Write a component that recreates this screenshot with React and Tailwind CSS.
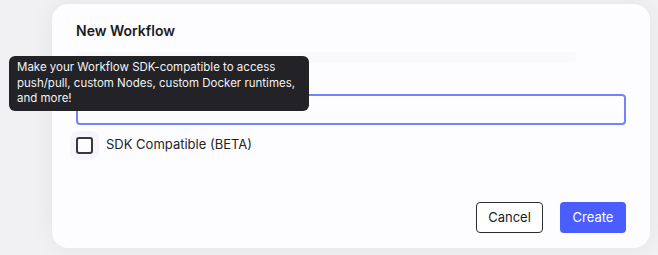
const App = () => {
  return (
    <div
      className="relative w-[658px] h-[255px] overflow-hidden bg-[#f1f0f3] pt-[4px] pl-[52px]"
      style={{ fontFamily: "Inter, 'Liberation Sans', sans-serif" }}
    >
      <div className="w-[598px] h-[244px] rounded-[16px] bg-[#fdfcfe] shadow-[0_0_24px_rgba(0,0,0,0.06)] flex flex-col px-[24px] pt-[18px] pb-[15px]">
        <h2 className="text-[14px] font-semibold text-[#1b1b1f] leading-[18px]">New Workflow</h2>
        <div className="mt-[12px] h-[10px] w-[500px] rounded bg-[#f9f8fb]" />
        <input
          className="mt-[32px] h-[31px] w-[550px] rounded-[4px] border-2 border-[#7383ff] bg-[#fdfcfe] outline-none"
          type="text"
        />
        <label className="mt-[10px] flex items-center gap-[13px] h-[20px]">
          <span className="w-[17px] h-[17px] rounded-[3px] border-2 border-[#38373d] ring-[6px] ring-[#f6f5fc]" />
          <span className="text-[13px] text-[#26252b]">SDK Compatible (BETA)</span>
        </label>
        <div className="mt-auto flex justify-end gap-[17px]">
          <button className="h-[31px] w-[67px] rounded-[4px] border border-[#2d2c31] text-[13px] text-[#1b1b1f] bg-white">
            Cancel
          </button>
          <button className="h-[31px] w-[66px] rounded-[4px] bg-[#4a5dfe] text-[13px] text-white">
            Create
          </button>
        </div>
      </div>
      <div className="absolute left-[9px] top-[56px] w-[300px] rounded-[6px] bg-[#232226] px-[8px] py-[4px] text-[11.5px] leading-[15.5px] text-[#f3f3f5]">
        Make your Workflow SDK-compatible to access push/pull, custom Nodes, custom Docker runtimes, and more!
      </div>
    </div>
  );
};

export default App;
